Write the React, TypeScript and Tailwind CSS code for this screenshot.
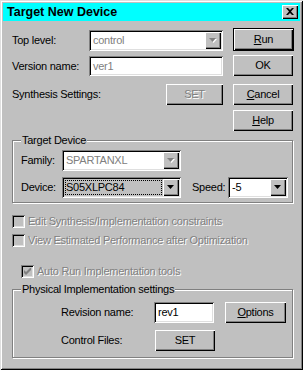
const raised = "shadow-[inset_1px_1px_0_#fff,inset_-1px_-1px_0_#000,inset_-2px_-2px_0_#808080]";
const sunken = "shadow-[inset_1px_1px_0_#808080,inset_-1px_-1px_0_#fff,inset_2px_2px_0_#000,inset_-2px_-2px_0_#dfdfdf]";
const grayText = "text-[#808080] [text-shadow:1px_1px_0_#fff]";

function Arrow({ disabled }: { disabled?: boolean }) {
  return (
    <div className={`flex h-[17px] w-[16px] shrink-0 items-center justify-center bg-[#c0c0c0] ${raised}`}>
      <svg width="7" height="5" viewBox="0 0 7 5" className="mr-[1px] mb-[1px]" style={{ overflow: "visible" }}>
        {disabled && <path d="M1 1h7L4.5 5z" fill="#fff" />}
        <path d="M0 0h7L3.5 4z" fill={disabled ? "#808080" : "#000"} />
      </svg>
    </div>
  );
}

function Combo({ value, className, disabled, focus }: { value: string; className: string; disabled?: boolean; focus?: boolean }) {
  return (
    <div className={`flex h-[21px] items-center bg-white p-[2px] ${sunken} ${className}`}>
      <div className={`flex h-full flex-1 items-center ${focus ? "bg-[#c0c0c0]" : ""} pl-[1px]`}>
        <span
          className={`flex h-[15px] items-center pl-[1px] pr-[2px] ${
            focus ? "outline-1 outline-dotted outline-black -outline-offset-1 flex-1 mr-[1px]" : ""
          } ${disabled ? "text-[#808080]" : "text-black"}`}
        >
          {value}
        </span>
      </div>
      <Arrow disabled={disabled} />
    </div>
  );
}

function Field({ value, className, disabled }: { value: string; className: string; disabled?: boolean }) {
  return (
    <div className={`flex h-[20px] items-center bg-white pl-[4px] ${sunken} ${className} ${disabled ? "text-[#808080]" : "text-black"}`}>
      {value}
    </div>
  );
}

function Btn({ children, className, def, disabled }: { children: React.ReactNode; className: string; def?: boolean; disabled?: boolean }) {
  const face = (
    <div className={`flex h-full w-full items-center justify-center bg-[#c0c0c0] ${raised} ${disabled ? grayText : "text-black"}`}>
      <span className="pb-[1px]">{children}</span>
    </div>
  );
  return def ? (
    <div className={`border border-black ${className}`}>{face}</div>
  ) : (
    <div className={className}>{face}</div>
  );
}

function Check({ label, checked, className }: { label: string; checked?: boolean; className?: string }) {
  return (
    <div className={`flex h-[13px] items-center ${className ?? ""}`}>
      <div className={`flex h-[13px] w-[13px] shrink-0 items-center justify-center bg-[#c0c0c0] ${sunken}`}>
        {checked && (
          <svg width="7" height="7" viewBox="0 0 7 7">
            <path d="M0 2v3l2 2 5-5V-1L2 4z" fill="#808080" />
          </svg>
        )}
      </div>
      <span className={`ml-[3px] whitespace-nowrap ${grayText}`}>{label}</span>
    </div>
  );
}

function Group({ title, className, children }: { title: string; className: string; children: React.ReactNode }) {
  return (
    <div className={`relative border border-[#808080] shadow-[inset_1px_1px_0_#fff,1px_1px_0_#fff] ${className}`}>
      <span className="absolute left-[8px] top-[-8px] bg-[#c0c0c0] px-[1px] leading-[14px]">{title}</span>
      {children}
    </div>
  );
}

export default function App() {
  return (
    <div className="h-[370px] w-[303px] bg-[#c0c0c0] font-['Liberation_Sans',Arial,sans-serif] text-[11px] leading-[13px] tracking-[-0.25px] text-black shadow-[inset_1px_1px_0_#dfdfdf,inset_-1px_-1px_0_#000,inset_2px_2px_0_#fff,inset_-2px_-2px_0_#808080]">
      <div className="flex h-full flex-col p-[3px]">
        {/* title bar */}
        <div className="flex h-[18px] shrink-0 items-center justify-between bg-[#00ffff] pl-[4px] pr-[2px]">
          <span className="text-[12.5px] font-bold tracking-[0px]">Target New Device</span>
          <div className={`flex h-[14px] w-[16px] items-center justify-center bg-[#c0c0c0] ${raised}`}>
            <svg width="8" height="7" viewBox="0 0 8 7" className="mb-[1px]">
              <path d="M0 0h2l2 2 2-2h2L5 3.5 8 7H6L4 5 2 7H0l3-3.5z" fill="#000" />
            </svg>
          </div>
        </div>

        <div className="flex flex-col pl-[9px]">
          {/* top section */}
          <div className="flex">
            <div className="flex w-[211px] flex-col">
              <div className="mt-[9px] flex h-[21px] items-center">
                <span className="w-[77px]">Top level:</span>
                <Combo value="control" className="w-[134px]" disabled />
              </div>
              <div className="mt-[5px] flex h-[20px] items-center">
                <span className="w-[77px]">Version name:</span>
                <Field value="ver1" className="w-[134px]" disabled />
              </div>
              <div className="mt-[8px] flex h-[21px] items-center">
                <span className="w-[154px]">Synthesis Settings:</span>
                <Btn className="h-[21px] w-[57px]" disabled>SET</Btn>
              </div>
            </div>
            <div className="ml-[10px] flex w-[61px] flex-col">
              <Btn className="mt-[7px] h-[23px] w-[61px]" def>
                <span className="underline underline-offset-1">R</span>un
              </Btn>
              <Btn className="mt-[4px] h-[21px] w-[60px]">OK</Btn>
              <Btn className="mt-[8px] h-[21px] w-[60px]">
                <span className="underline underline-offset-1">C</span>ancel
              </Btn>
              <Btn className="mt-[5px] h-[21px] w-[60px]">
                <span className="underline underline-offset-1">H</span>elp
              </Btn>
            </div>
          </div>

          {/* target device */}
          <Group title="Target Device" className="mt-[9px] h-[63px] w-[281px] pl-[8px] pt-[9px]">
            <div className="flex h-[21px] items-center">
              <span className="w-[41px]">Family:</span>
              <Combo value="SPARTANXL" className="w-[119px]" disabled />
            </div>
            <div className="mt-[6px] flex h-[21px] items-center">
              <span className="w-[41px]">Device:</span>
              <Combo value="S05XLPC84" className="w-[119px]" focus />
              <span className="ml-[11px] w-[36px]">Speed:</span>
              <Combo value="-5" className="w-[60px]" />
            </div>
          </Group>

          <Check className="mt-[12px]" label="Edit Synthesis/Implementation constraints" />
          <Check className="mt-[6px]" label="View Estimated Performance after Optimization" />
          <Check className="ml-[9px] mt-[18px]" label="Auto Run Implementation tools" checked />

          {/* physical implementation */}
          <Group title="Physical Implementation settings" className="mt-[11px] h-[69px] w-[281px] pl-[48px] pt-[12px]">
            <div className="flex h-[21px] items-center">
              <span className="w-[93px]">Revision name:</span>
              <Field value="rev1" className="h-[21px] w-[60px]" />
              <Btn className="ml-[11px] h-[21px] w-[61px]">
                <span className="underline underline-offset-1">O</span>ptions
              </Btn>
            </div>
            <div className="mt-[7px] flex h-[21px] items-center">
              <span className="w-[94px]">Control Files:</span>
              <Btn className="h-[21px] w-[60px]">SET</Btn>
            </div>
          </Group>
        </div>
      </div>
    </div>
  );
}
